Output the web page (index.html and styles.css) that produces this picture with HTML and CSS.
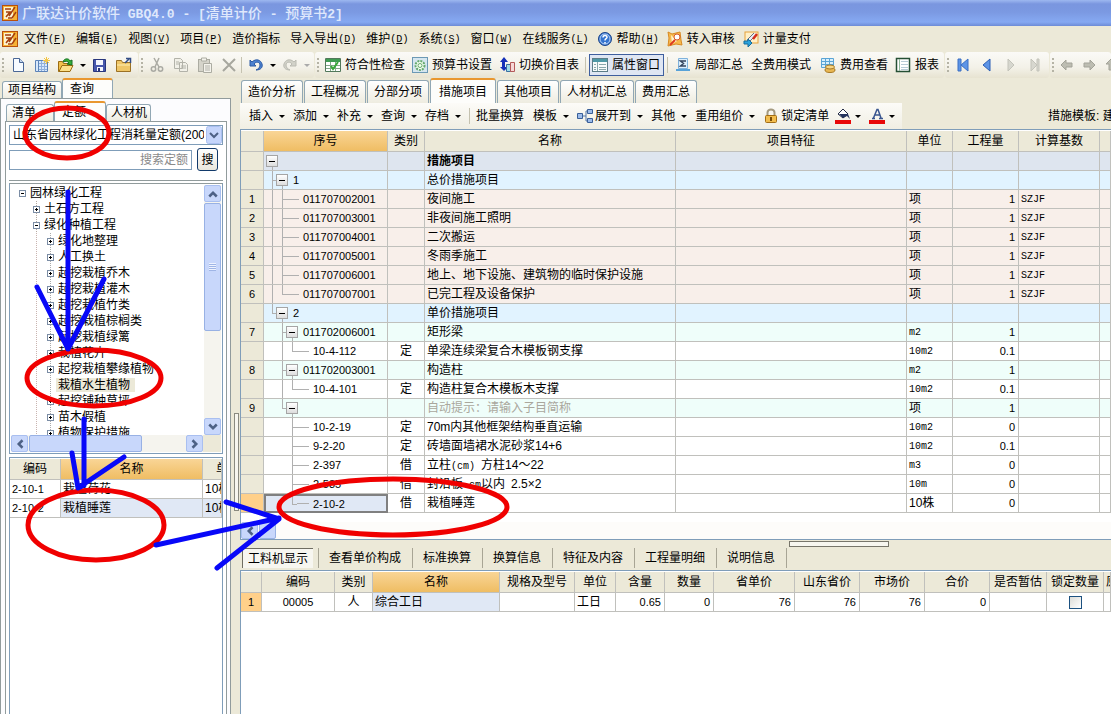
FILE: index.html
```html
<!DOCTYPE html>
<html lang="zh-CN">
<head>
<meta charset="utf-8">
<title>广联达计价软件 GBQ4.0</title>
<link rel="stylesheet" href="styles.css">
</head>
<body>
<svg class="defs" aria-hidden="true">
  <symbol id="logo" viewBox="0 0 16 16"><rect x=".5" y=".5" width="15" height="15" fill="#f6b234" stroke="#b8500c"/><path d="M2 2h9v12H2z" fill="#fdf3cf"/><path d="M3 4h6M4 7h4l-4 5M13 2L7 11M6 13h4l4-6" fill="none" stroke="#a5400e" stroke-width="1.500"/></symbol>
  <symbol id="prev" viewBox="0 0 16 16"><path d="M11 2v12L4 8z" fill="#5d94e6" stroke="#2d5fb5"/></symbol>
  <symbol id="arrow" viewBox="0 0 16 16"><path d="M2 8l5-5v3h6v4H7v3z" fill="#bdbdb2" stroke="#a3a399"/></symbol>
</svg>

<header class="title"><svg class="ic"><use href="#logo"/></svg><h1>广联达计价软件<span> GBQ4.0 - [</span>清单计价<span> - </span>预算书<span>2]</span></h1></header>

<nav class="menu">
  <svg class="ic"><use href="#logo"/></svg>
  <button>文件<span>(<u>F</u>)</span></button><button>编辑<span>(<u>E</u>)</span></button><button>视图<span>(<u>V</u>)</span></button><button>项目<span>(<u>P</u>)</span></button><button>造价指标</button><button>导入导出<span>(<u>D</u>)</span></button><button>维护<span>(<u>D</u>)</span></button><button>系统<span>(<u>S</u>)</span></button><button>窗口<span>(<u>W</u>)</span></button><button>在线服务<span>(<u>L</u>)</span></button>
  <button><svg class="ic" viewBox="0 0 16 16"><circle cx="8" cy="8" r="6.500" fill="#3474cf" stroke="#1c4488"/><circle cx="8" cy="8" r="5" fill="none" stroke="#b8d2f5"/><path d="M6 6.500c0-3 4.300-2.500 4 0-.2 1.300-2 1.200-2 3M8 11v1.500" fill="none" stroke="#fff" stroke-width="1.500"/></svg>帮助<span>(<u>H</u>)</span></button>
  <button><svg class="ic" viewBox="0 0 16 16"><path d="M1 1l4 2 8-2 1 8 1 5-6-1-8 2 1-8z" fill="#f7b94c" stroke="#d88922"/><path d="M4 4l6 6-5 3z" fill="#fff4cc"/><circle cx="10" cy="6" r="3" fill="#fff" stroke="#d85a2c"/><path d="M8 9l-5 5" stroke="#dd3a20" stroke-width="2"/></svg>转入审核</button>
  <button><svg class="ic" viewBox="0 0 16 16"><rect x="2" y="1" width="13" height="11" fill="#fff0c8" stroke="#e6a23a"/><path d="M14 3L7 10l-3 1 1-3 6-6" fill="#e9edf5" stroke="#6a6f7c"/><path d="M14 3l-4 5" stroke="#d52d1c" stroke-width="2.500"/><path d="M1 10h4V8l4 4-4 4v-3H1z" fill="#2aa3dc" stroke="#126c9f"/></svg>计量支付</button>
</nav>

<div class="bars">
  <div class="bar"><i class="grip"></i>
    <button class="tb" aria-label="新建"><svg class="ic" viewBox="0 0 16 16"><path d="M3.500 1.500h6l4 4v9h-10z" fill="#f7fbff" stroke="#4a6796"/><path d="M9.500 1.500v4h4" fill="#c6d8f0" stroke="#4a6796"/></svg></button>
    <button class="tb" aria-label="新建表"><svg class="ic" viewBox="0 0 16 16"><path d="M1.500 3.500h3v11h-3zM4.500 3.500h9v11h-9z" fill="#d8e8fb" stroke="#5c83b8"/><path d="M5 6.500h8M5 9.500h8M5 12.500h8M7.500 4v10M10.500 4v10" stroke="#8fb0dc"/><path d="M12.500 0v7M9 3.500h7M10 1l5 5M15 1l-5 5" stroke="#f3c545"/></svg></button>
    <button class="tb" aria-label="打开"><svg class="ic" viewBox="0 0 16 16"><path d="M.5 14.500v-10h4l1 2h6v8z" fill="#f1c14d" stroke="#9b6c12"/><path d="M1 14.500l3-6h11l-3 6z" fill="#fbe08a" stroke="#9b6c12"/><path d="M5 5c1-4 6-4 7-1l2-1v5l-5-1 2-1c-1-2-3-2-6-1z" fill="#35b03a" stroke="#167022"/></svg></button><i class="caret"></i>
    <button class="tb" aria-label="保存"><svg class="ic" viewBox="0 0 16 16"><path d="M1.500 2.500h12v12h-12z" fill="#4757ac" stroke="#28367c"/><path d="M4 3h7v5H4zM5 10h6v4H5z" fill="#f4f6fd"/><path d="M6 11h2v3H6z" fill="#28367c"/></svg></button>
    <button class="tb" aria-label="文件夹"><svg class="ic" viewBox="0 0 16 16"><path d="M.5 14.500v-11h5l1 2h8v9z" fill="#efc667" stroke="#9b7125"/><path d="M1 8h13" stroke="#fff0b5"/><path d="M9 6l4-4M10 1.500h4.500V6" fill="none" stroke="#334e86" stroke-width="1.500"/></svg></button>
  </div>
  <div class="bar"><i class="grip"></i>
    <button class="tb" aria-label="剪切"><svg class="ic" viewBox="0 0 16 16"><path d="M5 1l5 9M10 1L6 10" stroke="#aaaaa3" stroke-width="1.500"/><circle cx="4.500" cy="12" r="2.200" fill="none" stroke="#aaaaa3" stroke-width="1.500"/><circle cx="11.500" cy="12" r="2.200" fill="none" stroke="#aaaaa3" stroke-width="1.500"/></svg></button>
    <button class="tb" aria-label="复制"><svg class="ic" viewBox="0 0 16 16"><path d="M1.500 1.500h6l2 2v8h-8zM6.500 5.500h6l2 2v7h-8z" fill="#f1f0e8" stroke="#b2b2a9"/><path d="M8 9h5M8 11h5M3 5h3M3 7h3" stroke="#b2b2a9"/></svg></button>
    <button class="tb" aria-label="粘贴"><svg class="ic" viewBox="0 0 16 16"><rect x="1.500" y="2.500" width="11" height="12" fill="#d5d4ca" stroke="#acaca2"/><path d="M4.500 1h5v3h-5zM6.500 6.500h8v9h-8z" fill="#f4f3ec" stroke="#acaca2"/><path d="M8 9h5M8 11h5M8 13h5" stroke="#b2b2a9"/></svg></button>
    <button class="tb" aria-label="删除"><svg class="ic" viewBox="0 0 16 16"><path d="M2 2l12 12M14 2L2 14" stroke="#a7a79e" stroke-width="2"/></svg></button>
    <i class="sep tight"></i>
    <button class="tb" aria-label="撤销"><svg class="ic" viewBox="0 0 16 16"><path d="M2 3v6h6L6 7c2-3 6-2 6 1s-2 4-4 5c5 0 7-3 6-6C13 3 8 1 4 5z" fill="#4e83d1" stroke="#2c5aa4"/></svg></button><i class="caret"></i>
    <button class="tb" aria-label="重做"><svg class="ic" viewBox="0 0 16 16"><path d="M14 3v6H8l2-2C8 4 4 5 4 8s2 4 4 5C3 13 1 10 2 7c1-4 6-6 10-2z" fill="#d2d2c9" stroke="#bbbbb2"/></svg></button><i class="caret dim"></i>
  </div>
  <div class="bar"><i class="grip"></i>
    <button class="tx"><svg class="ic" viewBox="0 0 16 16"><path d="M.5 1.500h15v13H.5z" fill="#fff" stroke="#52785b"/><path d="M1 2h14v3H1z" fill="#3f9b52"/><path d="M1 8.500h14M1 11.500h14M5.500 5v9M10.500 5v9" stroke="#82a88a"/><path d="M6 9l2 3 5-7" fill="none" stroke="#3aa93a" stroke-width="2"/></svg>符合性检查</button>
    <button class="tx"><svg class="ic" viewBox="0 0 16 16"><rect x=".5" y=".5" width="15" height="15" fill="#d5e6ef" stroke="#6c99b5"/><circle cx="8" cy="8.500" r="4.500" fill="#f4fff0" stroke="#67a96f" stroke-width="2" stroke-dasharray="2 1"/><circle cx="8" cy="8.500" r="2" fill="none" stroke="#67a96f"/></svg>预算书设置</button>
    <button class="tx"><svg class="ic" viewBox="0 0 16 16"><path d="M5 0l4 5H6v5h3l-4 4-4-4h2V5H1z" fill="#1530b8"/><path d="M7.500 7.500h5v7h-5z" fill="#9edbe8" stroke="#396fa0"/><path d="M11.500 5.500h4v9h-4z" fill="#f6d7d7" stroke="#b45959"/></svg>切换价目表</button>
    <i class="sep"></i>
    <button class="tx on"><svg class="ic" viewBox="0 0 16 16"><rect x=".5" y="1.500" width="15" height="13" fill="#f7fbfb" stroke="#5c7d88"/><path d="M1 2h14v3H1z" fill="#4d98a6"/><path d="M5.500 5v9M2 7.500h2M7 7.500h7M2 10.500h2M7 10.500h7M2 12.500h2M7 12.500h7" stroke="#8aa7ac"/></svg>属性窗口</button>
    <i class="sep"></i>
    <button class="tx"><svg class="ic" viewBox="0 0 16 16"><path d="M3.500 1.500h9v10h-9z" fill="#dceffd" stroke="#7fb2dc"/><path d="M11 4H5.500l3 2.500-3 2.500H11" fill="none" stroke="#33445e" stroke-width="1.500"/><path d="M1 12h14v2H1z" fill="#58a2d8"/></svg>局部汇总</button>
    <button class="tx wide">全费用模式</button>
    <button class="tx"><svg class="ic" viewBox="0 0 16 16"><path d="M1.500 1.500h12v9h-12z" fill="#d8effb" stroke="#5aa4d5"/><path d="M2 4.500h11M2 7.500h11M5.500 2v8M9.500 2v8" stroke="#5aa4d5"/><ellipse cx="10" cy="13" rx="5" ry="2.500" fill="#e9b854" stroke="#a77722"/><ellipse cx="10" cy="10" rx="4.500" ry="2" fill="#f7d583" stroke="#a77722"/></svg>费用查看</button>
    <button class="tx"><svg class="ic" viewBox="0 0 16 16"><rect x="1.500" y="1.500" width="13" height="13" fill="#fff" stroke="#254f34" stroke-width="1.500"/><path d="M4.500 2v12" stroke="#8fb79b"/><path d="M6 4.500h7M6 7.500h7M6 10.500h7M6 12.500h7" stroke="#b8cbd6"/></svg>报表</button>
  </div>
  <div class="bar"><i class="grip"></i>
    <button class="tb" aria-label="首条"><svg class="ic" viewBox="0 0 16 16"><path d="M3 2h3v12H3zM13 2v12L6 8z" fill="#5d94e6" stroke="#3a6fc4"/></svg></button>
    <button class="tb" aria-label="上一条"><svg class="ic"><use href="#prev"/></svg></button>
    <button class="tb" aria-label="下一条"><svg class="ic" viewBox="0 0 16 16"><path d="M5 2v12l6-6z" fill="#d7d7cf" stroke="#c3c3ba"/></svg></button>
    <button class="tb" aria-label="末条"><svg class="ic" viewBox="0 0 16 16"><path d="M10 2h2v12h-2zM4 2v12l6-6z" fill="#d7d7cf" stroke="#c3c3ba"/></svg></button>
  </div>
  <div class="bar last"><i class="grip"></i>
    <button class="tb" aria-label="左移"><svg class="ic"><use href="#arrow"/></svg></button>
    <button class="tb" aria-label="右移"><svg class="ic flip"><use href="#arrow"/></svg></button>
    <button class="tb" aria-label="上移"><svg class="ic up"><use href="#arrow"/></svg></button>
  </div>
</div>

<main class="work">
  <aside class="side">
    <div class="tabs"><button>项目结构</button><button class="act">查询</button></div>
    <section class="pane">
      <div class="tabs inner"><button>清单</button><button class="act">定额</button><button>人材机</button></div>
      <div class="query">
        <select class="lib" aria-label="定额库"><option>山东省园林绿化工程消耗量定额(2006)</option></select>
        <form class="find"><input type="text" placeholder="搜索定额" aria-label="搜索定额"><button type="button">搜</button></form>
        <div class="treebox">
          <div class="view">
            <ul class="tree">
              <li><i class="pm m"></i>园林绿化工程</li>
              <li class="a"><i class="pm"></i>土石方工程</li>
              <li class="a"><i class="pm m"></i>绿化种植工程</li>
              <li class="b"><i class="pm"></i>绿化地整理</li>
              <li class="b"><i class="pm"></i>人工换土</li>
              <li class="b"><i class="pm"></i>起挖栽植乔木</li>
              <li class="b"><i class="pm"></i>起挖栽植灌木</li>
              <li class="b"><i class="pm"></i>起挖栽植竹类</li>
              <li class="b"><i class="pm"></i>起挖栽植棕榈类</li>
              <li class="b"><i class="pm"></i>起挖栽植绿篱</li>
              <li class="b"><i class="pm"></i>栽植花卉</li>
              <li class="b"><i class="pm"></i>起挖栽植攀缘植物</li>
              <li class="b"><i class="leaf"></i><mark>栽植水生植物</mark></li>
              <li class="b"><i class="pm"></i>起挖铺种草坪</li>
              <li class="b"><i class="pm"></i>苗木假植</li>
              <li class="b"><i class="pm"></i>植物保护措施</li>
            </ul>
            <div class="vbar"><button aria-label="向上"><svg viewBox="0 0 8 8"><path d="M1 6l3-3 3 3"/></svg></button><i class="thumb"></i><button class="end" aria-label="向下"><svg viewBox="0 0 8 8"><path d="M1 2l3 3 3-3"/></svg></button></div>
          </div>
          <div class="hbar"><button aria-label="向左"><svg viewBox="0 0 8 8"><path d="M6 1L3 4l3 3"/></svg></button><i class="thumb"></i><button class="end" aria-label="向右"><svg viewBox="0 0 8 8"><path d="M2 1l3 3-3 3"/></svg></button></div>
        </div>
        <div class="found">
          <table class="grid">
            <colgroup><col class="w51"><col><col class="w19"></colgroup>
            <thead><tr><th>编码</th><th class="hot">名称</th><th class="cut far">单位</th></tr></thead>
            <tbody>
              <tr><td class="d">2-10-1</td><td>栽植荷花</td><td>10株</td></tr>
              <tr><td class="d">2-10-2</td><td class="sel">栽植睡莲</td><td class="sel">10株</td></tr>
            </tbody>
          </table>
        </div>
      </div>
    </section>
  </aside>
  <div class="split"><i></i></div>

  <section class="content">
    <div class="tabs big"><button>造价分析</button><button>工程概况</button><button>分部分项</button><button class="act">措施项目</button><button>其他项目</button><button>人材机汇总</button><button>费用汇总</button></div>
    <div class="tools">
      <div class="strip">
        <button>插入<i class="caret"></i></button><button>添加<i class="caret"></i></button><button>补充<i class="caret"></i></button><button>查询<i class="caret"></i></button><button>存档<i class="caret"></i></button><i class="sep"></i>
        <button>批量换算</button><button class="gap">模板<i class="caret"></i></button><button><svg class="ic" viewBox="0 0 16 16"><path d="M5 8h4M9 3v10M9 3h2M9 13h2" stroke="#5276a8" fill="none"/><path d="M.5 5.500h5v5h-5zM10.500 1.500h5v4h-5zM10.500 10.500h5v4h-5z" fill="#9dbcea" stroke="#395f98"/></svg>展开到<i class="caret"></i></button><button>其他<i class="caret"></i></button><button>重用组价<i class="caret"></i></button>
        <button><svg class="ic" viewBox="0 0 16 16"><path d="M4.500 8V4.500a3.500 3 0 0 1 7 0V8" fill="none" stroke="#a49a80" stroke-width="2"/><rect x="2.500" y="7.500" width="11" height="7" rx="1" fill="#f2bd4e" stroke="#a36e16"/><path d="M8 9v4" stroke="#7a4e08" stroke-width="2"/></svg>锁定清单</button>
        <button class="color" aria-label="填充颜色"><svg class="ic" viewBox="0 0 16 16"><path d="M3 6l5-5 5 5-5 4z" fill="#fff" stroke="#222a44"/><path d="M4 6h9l2 5-3-3-4 2z" fill="#25345f"/><path d="M0 12h16v4H0z" fill="#e80808"/></svg><i class="caret"></i></button>
        <button class="color" aria-label="字体颜色"><svg class="ic" viewBox="0 0 16 16"><path d="M3 10.500h3M10 10.500h4M4.500 10L8 1.500h1L12 10M6 7h5" fill="none" stroke="#39558f" stroke-width="1.500"/><path d="M0 12h16v4H0z" fill="#e80808"/></svg><i class="caret"></i></button>
      </div>
      <span class="tpl">措施模板: 建</span>
    </div>

    <div class="main">
      <table class="grid items">
        <colgroup><col class="w23"><col class="w124"><col class="w37"><col class="w251"><col><col class="w46"><col class="w66"><col class="w81"><col class="w11"></colgroup>
        <thead><tr><th></th><th class="hot">序号</th><th>类别</th><th>名称</th><th>项目特征</th><th>单位</th><th>工程量</th><th>计算基数</th><th></th></tr></thead>
        <tbody>
          <tr class="root"><th></th><td class="code"><div><i class="g dn"><b></b></i></div></td><td></td><td>措施项目</td><td></td><td></td><td></td><td></td><td></td></tr>
          <tr class="grp"><th></th><td class="code"><div><i class="g t"></i><i class="g dn"><b></b></i><span>1</span></div></td><td></td><td>总价措施项目</td><td></td><td></td><td></td><td></td><td></td></tr>
          <tr class="pink"><th>1</th><td class="code"><div><i class="g v"></i><i class="g t"></i><i class="h"></i>011707002001</div></td><td></td><td>夜间施工</td><td></td><td>项</td><td class="n">1</td><td class="m">SZJF</td><td></td></tr>
          <tr class="pink"><th>2</th><td class="code"><div><i class="g v"></i><i class="g t"></i><i class="h"></i>011707003001</div></td><td></td><td>非夜间施工照明</td><td></td><td>项</td><td class="n">1</td><td class="m">SZJF</td><td></td></tr>
          <tr class="pink"><th>3</th><td class="code"><div><i class="g v"></i><i class="g t"></i><i class="h"></i>011707004001</div></td><td></td><td>二次搬运</td><td></td><td>项</td><td class="n">1</td><td class="m">SZJF</td><td></td></tr>
          <tr class="pink"><th>4</th><td class="code"><div><i class="g v"></i><i class="g t"></i><i class="h"></i>011707005001</div></td><td></td><td>冬雨季施工</td><td></td><td>项</td><td class="n">1</td><td class="m">SZJF</td><td></td></tr>
          <tr class="pink"><th>5</th><td class="code"><div><i class="g v"></i><i class="g t"></i><i class="h"></i>011707006001</div></td><td></td><td>地上、地下设施、建筑物的临时保护设施</td><td></td><td>项</td><td class="n">1</td><td class="m">SZJF</td><td></td></tr>
          <tr class="pink"><th>6</th><td class="code"><div><i class="g v"></i><i class="g l"></i><i class="h"></i>011707007001</div></td><td></td><td>已完工程及设备保护</td><td></td><td>项</td><td class="n">1</td><td class="m">SZJF</td><td></td></tr>
          <tr class="grp"><th></th><td class="code"><div><i class="g l"></i><i class="g dn"><b></b></i><span>2</span></div></td><td></td><td>单价措施项目</td><td></td><td></td><td></td><td></td><td></td></tr>
          <tr class="mint"><th>7</th><td class="code"><div><i class="g"></i><i class="g t"></i><i class="g dn"><b></b></i><span>011702006001</span></div></td><td></td><td>矩形梁</td><td></td><td class="m">m2</td><td class="n">1</td><td></td><td></td></tr>
          <tr><th></th><td class="code"><div><i class="g"></i><i class="g v"></i><i class="g l"></i><i class="h"></i>10-4-112</div></td><td class="c">定</td><td>单梁连续梁复合木模板钢支撑</td><td></td><td class="m">10m2</td><td class="n">0.1</td><td></td><td></td></tr>
          <tr class="mint"><th>8</th><td class="code"><div><i class="g"></i><i class="g t"></i><i class="g dn"><b></b></i><span>011702003001</span></div></td><td></td><td>构造柱</td><td></td><td class="m">m2</td><td class="n">1</td><td></td><td></td></tr>
          <tr><th></th><td class="code"><div><i class="g"></i><i class="g v"></i><i class="g l"></i><i class="h"></i>10-4-101</div></td><td class="c">定</td><td>构造柱复合木模板木支撑</td><td></td><td class="m">10m2</td><td class="n">0.1</td><td></td><td></td></tr>
          <tr class="mint"><th>9</th><td class="code"><div><i class="g"></i><i class="g l"></i><i class="g dn"><b></b></i></div></td><td></td><td class="hint">自动提示：请输入子目简称</td><td></td><td>项</td><td class="n">1</td><td></td><td></td></tr>
          <tr><th></th><td class="code"><div><i class="g"></i><i class="g"></i><i class="g t"></i><i class="h"></i>10-2-19</div></td><td class="c">定</td><td>70m内其他框架结构垂直运输</td><td></td><td class="m">10m2</td><td class="n">0</td><td></td><td></td></tr>
          <tr><th></th><td class="code"><div><i class="g"></i><i class="g"></i><i class="g t"></i><i class="h"></i>9-2-20</div></td><td class="c">定</td><td>砖墙面墙裙水泥砂浆14+6</td><td></td><td class="m">10m2</td><td class="n">0.1</td><td></td><td></td></tr>
          <tr><th></th><td class="code"><div><i class="g"></i><i class="g"></i><i class="g t"></i><i class="h"></i>2-397</div></td><td class="c">借</td><td>立柱<span class="mono">(cm) </span>方柱14～22</td><td></td><td class="m">m3</td><td class="n">0</td><td></td><td></td></tr>
          <tr><th></th><td class="code"><div><i class="g"></i><i class="g"></i><i class="g t"></i><i class="h"></i>2-535</div></td><td class="c">借</td><td>封沿板<span class="mono"> cm</span>以内<span class="mono"> </span>2.5×2</td><td></td><td class="m">10m</td><td class="n">0</td><td></td><td></td></tr>
          <tr><th class="cur"></th><td class="code focus"><div><i class="g"></i><i class="g"></i><i class="g l"></i><i class="h"></i>2-10-2</div></td><td class="c">借</td><td>栽植睡莲</td><td></td><td>10株</td><td class="n">0</td><td></td><td></td></tr>
        </tbody>
      </table>
      <div class="hbar low"><button aria-label="向左"><svg viewBox="0 0 8 8"><path d="M6 1L3 4l3 3"/></svg></button><i class="thumb"></i></div>
    </div>

    <div class="lower">
      <nav class="ltabs"><button class="act">工料机显示</button><button>查看单价构成</button><button>标准换算</button><button>换算信息</button><button>特征及内容</button><button>工程量明细</button><button>说明信息</button></nav>
      <i class="handle"></i>
    </div>
    <div class="detail">
      <table class="grid">
        <colgroup><col class="w21"><col class="w73"><col class="w38"><col class="w127"><col><col class="w41"><col class="w49"><col class="w49"><col class="w81"><col class="w65"><col class="w65"><col class="w65"><col class="w57"><col class="w57"><col class="w7"></colgroup>
        <thead><tr><th></th><th>编码</th><th>类别</th><th class="hot">名称</th><th>规格及型号</th><th>单位</th><th>含量</th><th>数量</th><th>省单价</th><th>山东省价</th><th>市场价</th><th>合价</th><th>是否暂估</th><th>锁定数量</th><th class="cut">原始</th></tr></thead>
        <tbody><tr><th class="cur">1</th><td class="c d">00005</td><td class="c">人</td><td class="sel">综合工日</td><td></td><td>工日</td><td class="n">0.65</td><td class="n">0</td><td class="n">76</td><td class="n">76</td><td class="n">76</td><td class="n">0</td><td></td><td class="c"><input type="checkbox" aria-label="锁定数量"></td><td></td></tr></tbody>
      </table>
    </div>
  </section>
</main>

<svg class="marks" viewBox="0 0 1111 714" aria-hidden="true">
  <g stroke="#f00000"><ellipse cx="67" cy="133" rx="42" ry="25"/><ellipse cx="94" cy="378" rx="67" ry="28"/><ellipse cx="96" cy="525" rx="68" ry="35"/><ellipse cx="393" cy="507" rx="114" ry="28"/></g>
  <g stroke="#0808f8"><path d="M68 192V349M37 287l31 62 36-70"/><path d="M84 419v66M72 453l6 35 46-31M84 485l-6 3"/><path d="M156 545l123-27M226 502l53 17-62 49"/></g>
</svg>
</body>
</html>
```
FILE: styles.css
```css
* { box-sizing: border-box; }
body {
  margin: 0;
  height: 100vh;
  display: flex;
  flex-direction: column;
  overflow: hidden;
  position: relative;
  background: #ece9d8;
  color: #000;
  font: 12px/16px "Liberation Sans", "Noto Sans CJK SC", sans-serif;
}
button, input, select { font: inherit; color: inherit; }
button { margin: 0; padding: 0; border: 0; background: none; white-space: nowrap; }
i { font-style: normal; flex: none; }
.defs { position: absolute; width: 0; height: 0; }
.ic { width: 16px; height: 16px; flex: none; display: block; }
.flip { transform: scaleX(-1); }
.up { transform: rotate(90deg); }

/* title and menu */
.title {
  flex: none;
  height: 26px;
  display: flex;
  align-items: center;
  gap: 4px;
  padding-left: 2px;
  background: linear-gradient(#9db8f0 0, #7a96df 4px, #7b99e2 12px, #86a9f2 22px, #6d8bd6 26px);
}
.title h1 { margin: 0; font-size: 14px; font-weight: 500; color: #dfe8fc; white-space: pre; }
.title span { font: bold 13px "Liberation Mono", monospace; }
.menu { flex: none; height: 26px; display: flex; align-items: center; gap: 10px; padding-left: 2px; }
.menu > .ic { margin-right: -4px; }
.menu button { display: flex; align-items: center; }
.menu button .ic { margin: 0 4px 0 -2px; }
.menu span { font: 10px "Liberation Mono", monospace; }

/* toolbars */
.bars { flex: none; display: flex; height: 26px; gap: 1px; }
.bar {
  display: flex;
  align-items: center;
  padding: 0 2px 0 1px;
  border-radius: 3px;
  background: linear-gradient(#fbfaf7, #f3f1e8 60%, #e7e3d1);
}
.bar.last { flex: 1; min-width: 0; overflow: hidden; }
.bar.last .tb { width: 22px; }
.grip { width: 2px; height: 14px; margin: 0 2px 0 1px; background: repeating-linear-gradient(#b5b3a5 0 2px, transparent 2px 4px); }
.tb { width: 24px; height: 22px; display: flex; align-items: center; justify-content: center; flex: none; }
.caret { width: 10px; height: 6px; display: flex; justify-content: center; }
.caret::before { content: ""; margin-top: 2px; border: 3px solid transparent; border-top-color: #000; border-bottom: 0; }
.caret.dim::before { border-top-color: #aaa; }
.sep { width: 1px; height: 16px; margin: 0 3px; background: #c5c2b0; }
.sep.tight { margin: 0 2px 0 0; }
.tx { display: flex; align-items: center; gap: 4px; height: 22px; padding: 0 3px 0 4px; }
.tx.on { padding: 0 3px 0 2px; border: 1px solid #3f5f9e; background: #dfe6f3; }
.tx.wide { padding: 0 5px; }

/* tab strips */
.tabs { display: flex; align-items: flex-end; height: 20px; }
.tabs button {
  height: 17px;
  padding: 0 5px;
  line-height: 16px;
  border: 1px solid #91a7b4;
  border-bottom: 0;
  border-radius: 3px 3px 0 0;
  background: linear-gradient(#fff, #eeece0);
}
.tabs .act { height: 20px; border-top: 2px solid #e9972f; background: #fdfdfb; }

.work { flex: 1; min-height: 0; display: flex; }
.side { flex: none; width: 231px; display: flex; flex-direction: column; }
.side > .tabs { padding-left: 2px; flex: none; }
.side > .tabs .act { width: 51px; text-align: left; padding-left: 7px; }
.pane { flex: 1; min-height: 0; display: flex; flex-direction: column; padding: 2px 3px 0 4px; border: 1px solid #919b9c; border-bottom: 0; background: #fcfcfe; }
.inner { flex: none; padding-left: 1px; }
.inner button { width: 48px; text-align: left; }
.inner .act { width: 52px; padding-left: 7px; }
.inner button:last-child { width: 45px; padding-left: 4px; }
.query { flex: 1; min-height: 0; display: flex; flex-direction: column; padding: 3px 3px 0 3px; border: 1px solid #919b9c; border-bottom: 0; background: #fff; }
.lib {
  flex: none;
  width: 100%;
  height: 20px;
  padding: 0 18px 0 3px;
  border: 1px solid #7f9db9;
  border-radius: 0;
  appearance: none;
  background: url("data:image/svg+xml,%3Csvg xmlns='http://www.w3.org/2000/svg' width='16' height='18'%3E%3Crect x='.5' y='.5' width='15' height='17' rx='2' fill='%23c5d5fb' stroke='%23aabff0'/%3E%3Cpath d='M4 7l4 4 4-4' fill='none' stroke='%234d6185' stroke-width='2'/%3E%3C/svg%3E") right center no-repeat #fff;
}
.find { display: flex; align-items: center; gap: 5px; margin-top: 3px; padding-bottom: 9px; border-bottom: 1px solid #919b9c; }
.find input { width: 183px; height: 20px; padding: 0 3px; border: 1px solid #7f9db9; text-align: right; background: #fff; }
.find input::placeholder { color: #8a8a8a; }
.find button { width: 21px; height: 23px; border: 1px solid #123a6b; border-radius: 3px; background: linear-gradient(#fff, #e9e7dd); }

/* tree */
.treebox { margin-top: 2px; border: 1px solid #7f9db9; border-top-color: #919b9c; background: #fff; padding: 1px; }
.view { display: flex; height: 250px; }
.tree { flex: 1; min-width: 0; margin: 0; padding: 0 0 0 8px; list-style: none; overflow: hidden; }
.tree li { display: flex; align-items: center; height: 16px; gap: 4px; white-space: nowrap; }
.tree .a { padding-left: 14px; background: repeating-linear-gradient(#b5a9a0 0 1px, transparent 1px 2px) 17px 0 / 1px 100% no-repeat; }
.tree .b { padding-left: 28px; background: repeating-linear-gradient(#c9b4b0 0 1px, transparent 1px 2px) 17px 0 / 1px 100% no-repeat, repeating-linear-gradient(#aaa 0 1px, transparent 1px 2px) 31px 0 / 1px 100% no-repeat; }
.tree mark { margin-left: -2px; padding: 0 5px 0 2px; background: #ece9d8; color: inherit; line-height: 14px; }
.pm { width: 7px; height: 7px; border: 1px solid #7b8da5; background: linear-gradient(#000, #000) center / 3px 1px no-repeat, linear-gradient(#000, #000) center / 1px 3px no-repeat, #fff; }
.pm.m { background: linear-gradient(#000, #000) center / 3px 1px no-repeat, #fff; }
.leaf { width: 7px; height: 1px; }
.vbar { width: 17px; display: flex; flex-direction: column; background: #f5f4ee; }
.vbar button, .hbar button { flex: none; width: 17px; height: 17px; display: flex; align-items: center; justify-content: center; border: 1px solid #a9bff0; border-radius: 2px; background: #c8d7fb; }
.vbar svg, .hbar svg { width: 10px; height: 10px; fill: none; stroke: #4d6185; stroke-width: 2; }
.thumb { border: 1px solid #98b1e4; border-radius: 2px; background: #c8d7fb; }
.vbar .thumb { height: 128px; margin-top: 1px; background: repeating-linear-gradient(#eef3ff 0 1px, #9fb5e6 1px 2px) center / 7px 8px no-repeat, #c8d7fb; }
.vbar .end { margin-top: auto; }
.hbar { display: flex; height: 17px; padding-right: 18px; background: linear-gradient(90deg, transparent 192px, #ece9d8 192px), #f5f4ee; }
.hbar .thumb { width: 113px; margin-left: 1px; }
.hbar .end { margin-left: auto; }

/* grids */
.grid { width: 100%; table-layout: fixed; border-spacing: 0; background: #fff; }
.grid th, .grid td { height: 19px; padding: 0; border: solid #c0c0bc; border-width: 0 1px 1px 0; font-weight: 400; line-height: 16px; white-space: nowrap; overflow: hidden; }
.grid th { background: #ece9d8; text-align: center; }
.grid thead th { height: 21px; }
.grid td { padding-left: 2px; text-align: left; }
.grid tbody th { font-size: 11px; }
.grid th.hot { background: linear-gradient(#f9d596, #efbd63); }
.grid th.cur { background: #ffd08a; }
.grid .sel { background: #e0e8f5; }
.grid .c { text-align: center; padding: 0; }
.grid .n { text-align: right; padding-right: 3px; font-size: 11px; }
.grid .m, .mono { font: 10px "Liberation Mono", monospace; }
.grid .d { font-size: 11px; }
.grid .cut { text-align: left; padding-left: 2px; }
.grid .far { padding-left: 13px; }
.w7 { width: 7px; } .w11 { width: 11px; } .w19 { width: 19px; } .w21 { width: 21px; } .w23 { width: 23px; }
.w37 { width: 37px; } .w38 { width: 38px; } .w41 { width: 41px; } .w46 { width: 46px; } .w49 { width: 49px; }
.w51 { width: 51px; } .w57 { width: 57px; } .w65 { width: 65px; } .w66 { width: 66px; } .w73 { width: 73px; }
.w81 { width: 81px; } .w124 { width: 124px; } .w127 { width: 127px; } .w251 { width: 251px; }
.root td { background: #dee5ef; font-weight: 700; }
.grp td { background: #e1f3ff; }
.pink td { background: #f8efea; }
.mint td { background: #effefa; }
.grid .hint { color: #aaa79d; }
.grid .code { padding: 0; font-size: 11px; font-weight: 400; }
.code div { display: flex; align-items: center; height: 18px; padding-left: 3px; line-height: 18px; }
.code span { margin-left: 6px; }
.g { width: 10px; height: 18px; display: flex; align-items: center; justify-content: center; --c: linear-gradient(#b0b0b0, #b0b0b0); background-repeat: no-repeat; }
.v { background-image: var(--c); background-size: 1px 100%; background-position: 5px 0; }
.t { background-image: var(--c), var(--c); background-size: 1px 100%, 5px 1px; background-position: 5px 0, 5px 9px; }
.l { background-image: var(--c), var(--c); background-size: 1px 9px, 5px 1px; background-position: 5px 0, 5px 9px; }
.dn { background-image: var(--c); background-size: 1px 9px; background-position: 5px 9px; }
.dn b { flex: none; width: 12px; height: 12px; border: 1px solid #a5a5a5; background: linear-gradient(#000, #000) center / 6px 1px no-repeat, linear-gradient(#fff, #ddd); }
.h { width: 12px; height: 1px; margin-right: 4px; background: #b0b0b0; }
.grid .focus { background: #e0e8f5; border: 2px solid #808080; }
.focus div { height: 15px; padding-left: 1px; }

.found { flex: 1; min-height: 0; margin-top: 3px; border: 1px solid #7f9db9; border-bottom: 0; background: #fff; padding-top: 1px; overflow: hidden; }

/* right side */
.split { flex: none; width: 9px; padding: 335px 0 0 3px; }
.split i { display: block; width: 5px; height: 98px; border: 1px solid #8a8a80; background: #f7f6ef; }
.content { flex: 1; min-width: 0; display: flex; flex-direction: column; }
.big { flex: none; height: 25px; gap: 1px; padding-left: 1px; }
.big button { height: 23px; padding: 0 6px; line-height: 22px; }
.big .act { height: 25px; padding: 0 8px; }
.tools { flex: none; height: 26px; display: flex; justify-content: space-between; }
.strip { display: flex; align-items: center; padding: 0 2px 0 6px; background: linear-gradient(#fcfbf8, #f0eee3); }
.strip button { display: flex; align-items: center; padding: 0 3px; }
.strip .gap { margin-left: 3px; }
.strip .caret { margin-left: 4px; }
.strip .ic { margin-right: 2px; }
.strip .color .caret { margin-left: 0; }
.tpl { width: 63px; line-height: 26px; white-space: nowrap; overflow: hidden; }
.main { flex: none; height: 411px; display: flex; flex-direction: column; justify-content: space-between; padding-top: 1px; border: solid #7f9db9; border-width: 1px 0 1px 1px; background: #fff; }
.low { padding: 0; background: #fdfcfa; }
.low .thumb { width: 17px; }
.lower { flex: none; height: 30px; position: relative; }
.ltabs { display: flex; padding-top: 8px; }
.ltabs button { height: 20px; padding: 0 11px 0 10px; border-right: 1px solid #a8a595; }
.ltabs .act { margin: 0 5px 0 2px; padding: 0 5px; border: solid #6f6d62; border-width: 1px 0 0 1px; background: #f7f6f0; }
.ltabs .act + button { border-left: 1px solid #a8a595; }
.handle { position: absolute; left: 549px; top: 1px; width: 100px; height: 6px; border: 1px solid #77756a; background: #f7f6ef; }
.detail { flex: 1; min-height: 0; padding-top: 1px; border: solid #7f9db9; border-width: 1px 0 0 1px; background: #fff; overflow: hidden; }
.detail input { display: block; appearance: none; width: 13px; height: 13px; margin: 0 auto; border: 1px solid #1c5180; background: linear-gradient(135deg, #dcdcd7, #fff); }

.marks { position: absolute; left: 0; top: 0; width: 1111px; height: 714px; pointer-events: none; fill: none; stroke-width: 5px; stroke-linecap: round; stroke-linejoin: round; }
```
